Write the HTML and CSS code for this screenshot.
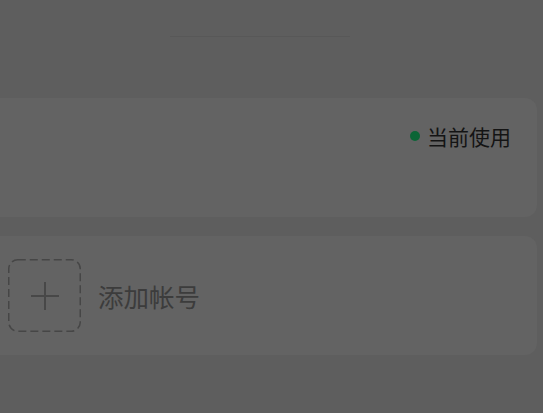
FILE: index.html
```html
<!DOCTYPE html>
<html lang="zh">
<head>
<meta charset="utf-8">
<link rel="stylesheet" href="styles.css">
</head>
<body>
<div class="page">
  <div class="header"><div class="rule"></div></div>
  <div class="list">
    <div class="card current">
      <div class="status"><span class="dot"></span><span class="status-text">当前使用</span></div>
    </div>
    <div class="card add">
      <div class="add-box">
        <svg class="dash" width="73" height="73" viewBox="0 0 73 73"><rect x="0.75" y="0.75" width="71.5" height="71.5" rx="9" fill="none" stroke="#464646" stroke-width="1.5" stroke-dasharray="8 4"/></svg>
        <svg width="30" height="30" viewBox="0 0 30 30"><path d="M15 1V29M1 15H29" stroke="#484848" stroke-width="2" fill="none"/></svg>
      </div>
      <span class="add-text">添加帐号</span>
    </div>
  </div>
</div>
</body>
</html>
```
FILE: styles.css
```css
html, body {
  margin: 0;
  padding: 0;
  background: #5e5e5e;
  font-family: "Noto Sans CJK SC", "Noto Sans", sans-serif;
}
.page {
  width: 543px;
  height: 413px;
  overflow: hidden;
}
.header {
  height: 37px;
  display: flex;
  align-items: flex-end;
  justify-content: center;
  padding-right: 23px;
}
.rule {
  width: 180px;
  height: 1px;
  background: #585858;
}
.list {
  margin-top: 61px;
  margin-left: -20px;
  width: 557px;
  display: flex;
  flex-direction: column;
  gap: 19px;
}
.card {
  background: #636363;
  border-radius: 12px;
  height: 119px;
}
.current {
  display: flex;
  justify-content: flex-end;
  align-items: flex-start;
  padding-right: 26px;
  padding-top: 23px;
  box-sizing: border-box;
}
.status {
  display: flex;
  align-items: center;
  gap: 7px;
}
.dot {
  width: 10px;
  height: 10px;
  border-radius: 50%;
  background: #0b6536;
}
.status-text {
  font-size: 21px;
  color: #141414;
  line-height: 30px;
}
.add {
  display: flex;
  align-items: center;
  padding-left: 28px;
}
.add-box {
  position: relative;
  width: 73px;
  height: 73px;
  display: flex;
  align-items: center;
  justify-content: center;
}
.dash {
  position: absolute;
  left: 0;
  top: 0;
}
.add-text {
  margin-left: 17px;
  font-size: 25.5px;
  color: #3c3c3c;
}
```
